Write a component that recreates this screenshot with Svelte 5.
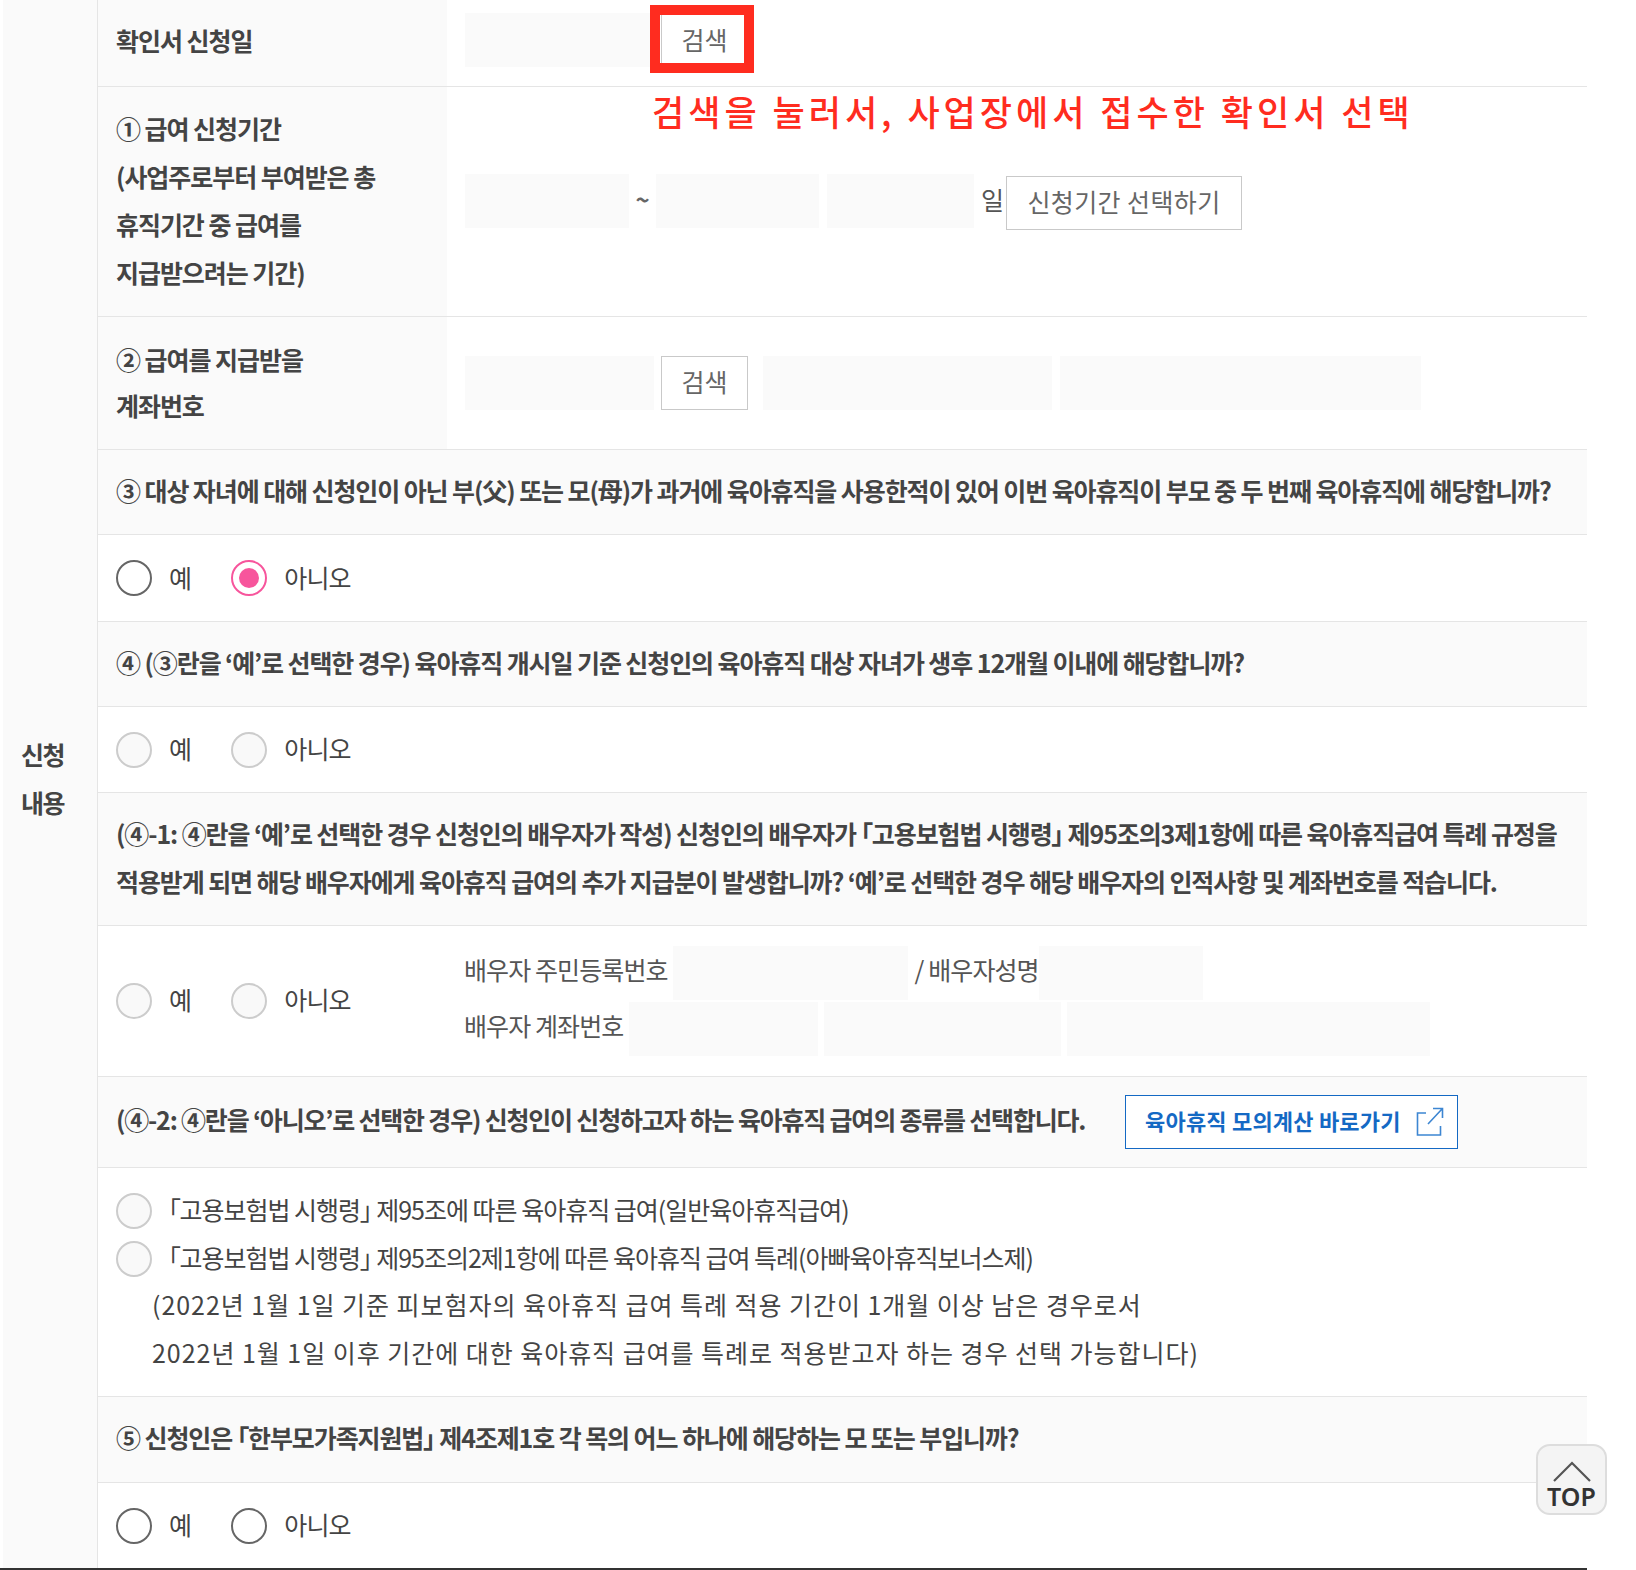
<svelte:options runes />
<script lang="ts">
  const yesNo = [
    { label: '예', state: 'off' },
    { label: '아니오', state: 'off' },
  ];
</script>

{#snippet radio(state: string)}
  <span class="radio radio--{state}"></span>
{/snippet}

{#snippet choices(items: { label: string; state: string }[])}
  <div class="choices">
    {#each items as item}
      <label class="choice">
        {@render radio(item.state)}
        <span>{item.label}</span>
      </label>
    {/each}
  </div>
{/snippet}

<main class="page">
  <div class="form">
    <div class="side"><p>신청<br />내용</p></div>

    <div class="body">
      <section class="row row--date">
        <div class="head"><p>확인서 신청일</p></div>
        <div class="cell">
          <span class="field w-bank"></span>
          <button class="btn btn--search">검색</button>
        </div>
      </section>

      <section class="row row--period">
        <div class="head">
          <p>① 급여 신청기간<br />(사업주로부터 부여받은 총<br />휴직기간 중 급여를<br />지급받으려는 기간)</p>
        </div>
        <div class="cell">
          <span class="field w-from"></span>
          <span class="tilde">~</span>
          <span class="field w-to"></span>
          <span class="field w-days"></span>
          <span class="unit">일</span>
          <button class="btn btn--period">신청기간 선택하기</button>
        </div>
      </section>

      <section class="row row--account">
        <div class="head"><p>② 급여를 지급받을<br />계좌번호</p></div>
        <div class="cell">
          <span class="field w-bank"></span>
          <button class="btn btn--search">검색</button>
          <span class="field w-holder"></span>
          <span class="field w-number"></span>
        </div>
      </section>

      <section class="question q-86">
        <p>③ 대상 자녀에 대해 신청인이 아닌 부(父) 또는 모(母)가 과거에 육아휴직을 사용한적이 있어 이번 육아휴직이 부모 중 두 번째 육아휴직에 해당합니까?</p>
      </section>
      <section class="answer a-87">
        <div class="choices">
          <label class="choice">{@render radio('empty')}<span>예</span></label>
          <label class="choice">{@render radio('on')}<span>아니오</span></label>
        </div>
      </section>

      <section class="question q-85">
        <p>④ (③란을 ‘예’로 선택한 경우) 육아휴직 개시일 기준 신청인의 육아휴직 대상 자녀가 생후 12개월 이내에 해당합니까?</p>
      </section>
      <section class="answer a-87">
        {@render choices(yesNo)}
      </section>

      <section class="question q-132">
        <p>(④-1: ④란을 ‘예’로 선택한 경우 신청인의 배우자가 작성) 신청인의 배우자가 「고용보험법 시행령」 제95조의3제1항에 따른 육아휴직급여 특례 규정을<br />적용받게 되면 해당 배우자에게 육아휴직 급여의 추가 지급분이 발생합니까? ‘예’로 선택한 경우 해당 배우자의 인적사항 및 계좌번호를 적습니다.</p>
      </section>
      <section class="answer a-151">
        {@render choices(yesNo)}
        <div class="spouse">
          <div class="spouse-line">
            <span class="spouse-label">배우자 주민등록번호</span>
            <span class="field w-rrn"></span>
            <span class="spouse-label">/ 배우자성명</span>
            <span class="field w-name"></span>
          </div>
          <div class="spouse-line">
            <span class="spouse-label">배우자 계좌번호</span>
            <span class="field w-s-bank"></span>
            <span class="field w-s-holder"></span>
            <span class="field w-s-number"></span>
          </div>
        </div>
      </section>

      <section class="question q-92 question--link">
        <p>(④-2: ④란을 ‘아니오’로 선택한 경우) 신청인이 신청하고자 하는 육아휴직 급여의 종류를 선택합니다.</p>
        <a class="calc-link" href="#top">
          육아휴직 모의계산 바로가기
          <svg width="28" height="30" viewBox="0 0 28 30" fill="none" stroke="#3d86d2" stroke-width="1.6" aria-hidden="true">
            <path d="M10 6H1.5v22h23v-9" />
            <path d="M12 17 26 2M17 1.5h9.5V11" />
          </svg>
        </a>
      </section>
      <section class="options">
        <label class="option">
          {@render radio('off')}
          <span>「고용보험법 시행령」 제95조에 따른 육아휴직 급여(일반육아휴직급여)</span>
        </label>
        <label class="option">
          {@render radio('off')}
          <span>「고용보험법 시행령」 제95조의2제1항에 따른 육아휴직 급여 특례(아빠육아휴직보너스제)</span>
        </label>
        <p class="option-note">(2022년 1월 1일 기준 피보험자의 육아휴직 급여 특례 적용 기간이 1개월 이상 남은 경우로서<br />2022년 1월 1일 이후 기간에 대한 육아휴직 급여를 특례로 적용받고자 하는 경우 선택 가능합니다)</p>
      </section>

      <section class="question q-87">
        <p>⑤ 신청인은 「한부모가족지원법」 제4조제1호 각 목의 어느 하나에 해당하는 모 또는 부입니까?</p>
      </section>
      <section class="answer a-85">
        <div class="choices">
          <label class="choice">{@render radio('empty')}<span>예</span></label>
          <label class="choice">{@render radio('empty')}<span>아니오</span></label>
        </div>
      </section>
    </div>
  </div>

  <!-- annotation drawn over the capture -->
  <div class="mark"></div>
  <p class="note">검색을 눌러서, 사업장에서 접수한 확인서 선택</p>

  <a class="top" href="#top">
    <svg width="38" height="21" viewBox="0 0 38 21" fill="none" stroke="#555" stroke-width="2.2" aria-hidden="true">
      <path d="M1 20 19 2l18 18" />
    </svg>
    <span>TOP</span>
  </a>
</main>

<style>
  :global(body) {
    margin: 0;
    background: #fff;
  }

  .page {
    position: relative;
    width: 1636px;
    height: 1570px;
    overflow: hidden;
    font-family: 'Noto Sans CJK KR', 'Noto Sans', sans-serif;
    font-size: 25px;
    color: #444;
  }

  p {
    margin: 0;
  }

  .form {
    display: flex;
    width: 1587px;
    height: 1570px;
    box-sizing: border-box;
    border-bottom: 2px solid #333;
  }

  .side {
    width: 95px;
    margin-left: 3px;
    flex-shrink: 0;
    display: flex;
    align-items: center;
    padding: 0 0 12px 18px;
    box-sizing: border-box;
    background: #fafafa;
    border-right: 1px solid #e5e5e5;
    font-weight: 700;
    line-height: 48px;
    letter-spacing: -1.5px;
  }

  .body {
    flex: 1;
    min-width: 0;
    display: flex;
    flex-direction: column;
  }

  .row {
    display: flex;
    box-sizing: border-box;
    border-bottom: 1px solid #e5e5e5;
  }

  .row--date { height: 87px; }
  .row--period { height: 231px; }
  .row--account { height: 133px; }

  .row--date .head,
  .row--date .cell { padding-bottom: 5px; }
  .row--period .head { padding-bottom: 2px; }
  .row--period .cell { padding-bottom: 1px; }
  .row--account .head { padding-bottom: 2px; line-height: 46px; }

  .head {
    width: 349px;
    flex-shrink: 0;
    display: flex;
    align-items: center;
    padding-left: 18px;
    box-sizing: border-box;
    background: #fafafa;
    font-weight: 700;
    line-height: 48px;
    letter-spacing: -1.05px;
    font-feature-settings: 'palt';
  }

  .cell {
    flex: 1;
    display: flex;
    align-items: center;
    padding-left: 18px;
  }

  .field {
    display: block;
    height: 54px;
    flex-shrink: 0;
    background: #fafafa;
  }

  .w-from { width: 164px; }
  .w-to { width: 163px; margin-right: 8px; }
  .w-days { width: 147px; }
  .w-bank { width: 189px; margin-right: 7px; }
  .w-holder { width: 289px; margin-left: 15px; margin-right: 8px; }
  .w-number { width: 361px; }
  .w-rrn { width: 235px; margin-left: 5px; margin-right: 7px; }
  .w-name { width: 164px; }
  .w-s-bank { width: 189px; margin-left: 6px; margin-right: 6px; }
  .w-s-holder { width: 237px; margin-right: 6px; }
  .w-s-number { width: 363px; }

  .tilde {
    width: 27px;
    padding-bottom: 4px;
    text-align: center;
    font-size: 24px;
    font-weight: 700;
    color: #666;
  }

  .unit {
    margin-left: 7px;
    margin-right: 3px;
    padding-bottom: 4px;
    color: #555;
    letter-spacing: -1px;
  }

  .btn {
    flex-shrink: 0;
    height: 54px;
    padding: 0 0 3px;
    background: #fff;
    border: 1px solid #c9c9c9;
    font: inherit;
    color: #666;
    letter-spacing: 0;
  }

  .btn--search { width: 87px; }
  .btn--period { width: 236px; margin-top: 4px; letter-spacing: 0.4px; }

  .question {
    box-sizing: border-box;
    display: flex;
    align-items: center;
    padding: 0 0 4px 18px;
    background: #fafafa;
    border-bottom: 1px solid #e5e5e5;
    font-weight: 700;
    line-height: 48px;
    letter-spacing: -1.1px;
    font-feature-settings: 'palt';
    white-space: nowrap;
  }

  .q-86 { height: 86px; }
  .q-85 { height: 85px; }
  .q-87 { height: 87px; }
  .q-92 { height: 92px; }
  .q-132 { height: 133px; }

  .question--link {
    padding-bottom: 0;
    letter-spacing: -1.2px;
  }

  .question--link p {
    width: 1009px;
    margin-bottom: 6px;
  }

  .calc-link {
    display: flex;
    align-items: center;
    justify-content: space-between;
    width: 333px;
    height: 54px;
    box-sizing: border-box;
    padding: 0 13px 3px 19px;
    background: #fff;
    border: 1px solid #1469c4;
    font-size: 22px;
    letter-spacing: 0.2px;
    font-feature-settings: normal;
    color: #1469c4;
    text-decoration: none;
  }

  .calc-link svg {
    margin-top: 3px;
  }

  .answer {
    box-sizing: border-box;
    display: flex;
    align-items: center;
    padding-left: 18px;
    border-bottom: 1px solid #e5e5e5;
  }

  .a-87 { height: 87px; }
  .a-85 { height: 85px; border-bottom: 0; }
  .a-151 { height: 151px; }

  .choices {
    display: flex;
    gap: 40px;
    width: 349px;
    flex-shrink: 0;
  }

  .choice,
  .option {
    display: flex;
    align-items: center;
    gap: 16px;
    letter-spacing: -0.8px;
    white-space: nowrap;
  }

  .choice > span:last-child {
    padding-bottom: 3px;
    padding-left: 1px;
  }

  .radio {
    display: block;
    position: relative;
    width: 36px;
    height: 36px;
    flex-shrink: 0;
    box-sizing: border-box;
    border-radius: 50%;
    border: 2px solid #ccc;
    background: #f9f9f9;
  }

  .radio--empty {
    border-color: #666;
    background: #fff;
  }

  .radio--on {
    border-color: #f7559c;
    background: #fff;
  }

  .radio--on::after {
    content: '';
    position: absolute;
    inset: 6px;
    border-radius: 50%;
    background: #f7559c;
  }

  .spouse {
    display: flex;
    flex-direction: column;
    gap: 2px;
    margin-left: -1px;
    white-space: nowrap;
    letter-spacing: -0.9px;
    color: #555;
  }

  .spouse-line {
    display: flex;
    align-items: center;
  }

  .spouse-label {
    padding-bottom: 7px;
  }

  .options {
    height: 229px;
    box-sizing: border-box;
    padding: 19px 0 0 18px;
    border-bottom: 1px solid #e5e5e5;
    line-height: 48px;
  }

  .option {
    height: 48px;
    letter-spacing: -1px;
    font-feature-settings: 'palt';
  }

  .option > span:last-child {
    padding-bottom: 4px;
  }

  .option-note {
    margin-top: -3px;
    padding-left: 36px;
    letter-spacing: 0.97px;
    white-space: nowrap;
  }

  .mark {
    position: absolute;
    left: 650px;
    top: 5px;
    width: 104px;
    height: 68px;
    box-sizing: border-box;
    border: 10px solid #ff2c1f;
  }

  .note {
    position: absolute;
    left: 652px;
    top: 86px;
    font-size: 35px;
    font-weight: 500;
    line-height: 50px;
    letter-spacing: 4px;
    color: #ff2c1f;
    white-space: nowrap;
  }

  .top {
    position: absolute;
    left: 1536px;
    top: 1444px;
    width: 71px;
    height: 71px;
    box-sizing: border-box;
    display: flex;
    flex-direction: column;
    align-items: center;
    padding-top: 15px;
    background: #f4f4f4;
    border: 2px solid #ddd;
    border-radius: 14px;
    font-family: 'Noto Sans', sans-serif;
    font-size: 25px;
    font-weight: 600;
    line-height: 29px;
    color: #333;
    text-decoration: none;
  }
</style>
